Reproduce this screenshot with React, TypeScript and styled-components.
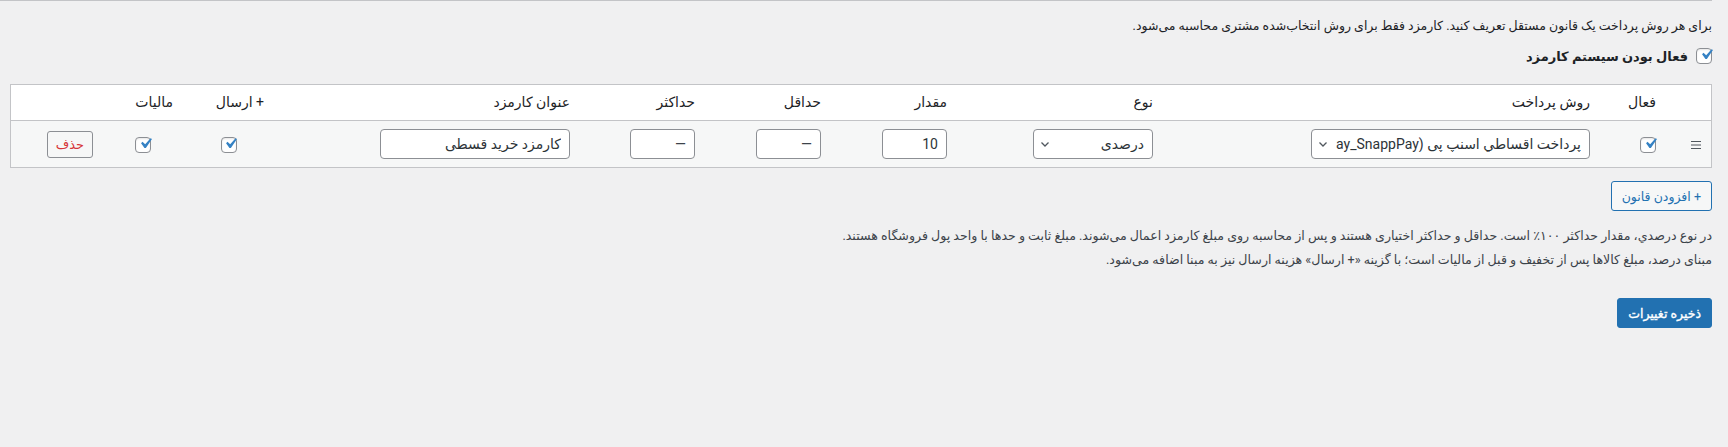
import React from "react";
import styled, { createGlobalStyle } from "styled-components";

const FONT = `Roboto, "DejaVu Sans", sans-serif`;

const Global = createGlobalStyle`
  html, body { margin: 0; padding: 0; background: #f0f0f1; }
  body { font-family: ${FONT}; color: #1d2327; font-size: 13px; }
  * { box-sizing: border-box; }
`;

const Page = styled.div`
  padding: 0 16px 0 10px;
  display: flex;
  flex-direction: column;
  align-items: flex-start;
`;

const TopRule = styled.div`
  align-self: stretch;
  margin-left: -10px;
  height: 1px;
  background: #c3c4c7;
`;

const Intro = styled.p`
  margin: 15px 0 0;
  font-size: 12.5px;
  line-height: 20px;
  color: #1d2327;
`;

const ToggleRow = styled.label`
  margin-top: 10px;
  height: 20px;
  display: flex;
  align-items: center;
  gap: 8px;
`;

const ToggleText = styled.span`
  font-size: 13px;
  font-weight: 700;
  color: #1d2327;
`;

const Box = styled.span`
  width: 16px;
  height: 16px;
  flex: none;
  display: inline-flex;
  align-items: center;
  justify-content: center;
  border: 1px solid #8c8f94;
  border-radius: 4px;
  background: #fff;
  box-shadow: inset 0 1px 2px rgba(0, 0, 0, 0.1);
  vertical-align: middle;
  svg { width: 21px; height: 21px; margin: -3px -4px 0 0; flex: none; }
`;

const Checkbox = () => (
  <Box role="checkbox" aria-checked="true">
    <svg viewBox="0 0 20 20">
      <path d="M14.83 4.89l1.34.94-5.81 8.38H9.02L5.78 9.67l1.34-1.25 2.57 2.4z" fill="#3582c4" />
    </svg>
  </Box>
);

const Table = styled.table`
  margin-top: 18px;
  width: 100%;
  border: 1px solid #c3c4c7;
  border-collapse: separate;
  border-spacing: 0;
  table-layout: fixed;
  background: #fff;
`;

const Th = styled.th`
  text-align: right;
  font-weight: 400;
  font-size: 14px;
  line-height: 19px;
  padding: 8px 10px;
  color: #1d2327;
  border-bottom: 1px solid #c3c4c7;
  white-space: nowrap;
`;

const Row = styled.tr`
  background: #f6f7f7;
`;

const Td = styled.td<{ $center?: boolean }>`
  padding: 8px 10px;
  height: 46px;
  text-align: ${(p) => (p.$center ? "center" : "right")};
  vertical-align: middle;
  font-size: 14px;
`;

const Handle = styled.svg`
  width: 10px;
  height: 10px;
  display: inline-block;
  vertical-align: middle;
`;

const TextInput = styled.input<{ $w: number }>`
  width: ${(p) => p.$w}px;
  height: 30px;
  padding: 0 8px;
  border: 1px solid #8c8f94;
  border-radius: 4px;
  background: #fff;
  color: #2c3338;
  font-family: ${FONT};
  font-size: 14px;
  text-align: right;
  direction: rtl;
  &::placeholder { color: #3c434a; opacity: 1; }
`;

const SelectWrap = styled.span<{ $w: number }>`
  position: relative;
  display: inline-block;
  width: ${(p) => p.$w}px;
  height: 30px;
  vertical-align: middle;
`;

const Select = styled.select`
  appearance: none;
  -webkit-appearance: none;
  width: 100%;
  height: 30px;
  padding: 0 8px 0 24px;
  border: 1px solid #8c8f94;
  border-radius: 4px;
  background: #fff;
  color: #2c3338;
  font-family: ${FONT};
  font-size: 14px;
  direction: rtl;
`;

const Chevron = styled.svg`
  position: absolute;
  left: 6px;
  top: 9px;
  width: 12px;
  height: 12px;
  pointer-events: none;
`;

const DeleteButton = styled.button`
  height: 27px;
  padding: 0 8px;
  border: 1px solid #8c8f94;
  border-radius: 3px;
  background: #f6f7f7;
  color: #d63638;
  font-family: ${FONT};
  font-size: 13px;
`;

const AddButton = styled.button`
  margin-top: 13px;
  height: 30px;
  padding: 0 10px;
  border: 1px solid #2271b1;
  border-radius: 3px;
  background: #f6f7f7;
  color: #2271b1;
  font-family: ${FONT};
  font-size: 12.5px;
`;

const Notes = styled.div`
  margin-top: 13px;
  display: flex;
  flex-direction: column;
`;

const NoteLine = styled.p`
  margin: 0;
  font-size: 12.6px;
  line-height: 24px;
  color: #3c434a;
`;

const SaveButton = styled.button`
  margin-top: 26px;
  height: 30px;
  padding: 0 10px;
  border: 1px solid #2271b1;
  border-radius: 3px;
  background: #2271b1;
  color: #fff;
  font-family: ${FONT};
  font-size: 12.5px;
  font-weight: 400;
  -webkit-text-stroke: 0.35px #fff;
`;

const COLS = [45, 66, 437, 206, 126, 126, 125, 306, 91, 80, 92];
const HEADERS = ["", "فعال", "روش پرداخت", "نوع", "مقدار", "حداقل", "حداکثر", "عنوان کارمزد", "+ ارسال", "مالیات", ""];

const SelectBox = ({ w, value }: { w: number; value: string }) => (
  <SelectWrap $w={w}>
    <Select defaultValue={value}>
      <option value={value}>{value}</option>
    </Select>
    <Chevron viewBox="0 0 12 12">
      <path d="M2.5 4.5 6 8l3.5-3.5" fill="none" stroke="#50575e" strokeWidth="1.3" />
    </Chevron>
  </SelectWrap>
);

export default function App() {
  return (
    <>
      <Global />
      <Page dir="rtl">
        <TopRule />
        <Intro>برای هر روش پرداخت یک قانون مستقل تعریف کنید. کارمزد فقط برای روش انتخاب‌شده مشتری محاسبه می‌شود.</Intro>
        <ToggleRow>
          <Checkbox />
          <ToggleText>فعال بودن سیستم کارمزد</ToggleText>
        </ToggleRow>
        <Table>
          <colgroup>
            {COLS.map((w, i) => (
              <col key={i} style={{ width: w }} />
            ))}
          </colgroup>
          <thead>
            <tr>
              {HEADERS.map((h, i) => (
                <Th key={i}>{h}</Th>
              ))}
            </tr>
          </thead>
          <tbody>
            <Row>
              <Td>
                <Handle viewBox="0 0 10 10">
                  <path d="M0 1.5h10M0 5h10M0 8.5h10" stroke="#50575e" strokeWidth="1" />
                </Handle>
              </Td>
              <Td>
                <Checkbox />
              </Td>
              <Td>
                <SelectBox w={279} value="پرداخت اقساطي اسنپ پی (WC_Gateway_SnappPay)" />
              </Td>
              <Td>
                <SelectBox w={120} value="درصدی" />
              </Td>
              <Td>
                <TextInput $w={65} defaultValue="10" />
              </Td>
              <Td>
                <TextInput $w={65} placeholder="—" />
              </Td>
              <Td>
                <TextInput $w={65} placeholder="—" />
              </Td>
              <Td>
                <TextInput $w={190} defaultValue="کارمزد خرید قسطی" />
              </Td>
              <Td $center>
                <Checkbox />
              </Td>
              <Td $center>
                <Checkbox />
              </Td>
              <Td>
                <DeleteButton>حذف</DeleteButton>
              </Td>
            </Row>
          </tbody>
        </Table>
        <AddButton>+ افزودن قانون</AddButton>
        <Notes>
          <NoteLine>در نوع درصدي، مقدار حداکثر ۱۰۰٪ است. حداقل و حداکثر اختیاری هستند و پس از محاسبه روی مبلغ کارمزد اعمال می‌شوند. مبلغ ثابت و حدها با واحد پول فروشگاه هستند.</NoteLine>
          <NoteLine>مبنای درصد، مبلغ کالاها پس از تخفیف و قبل از مالیات است؛ با گزینه «+ ارسال» هزینه ارسال نیز به مبنا اضافه می‌شود.</NoteLine>
        </Notes>
        <SaveButton>ذخیره تغییرات</SaveButton>
      </Page>
    </>
  );
}
